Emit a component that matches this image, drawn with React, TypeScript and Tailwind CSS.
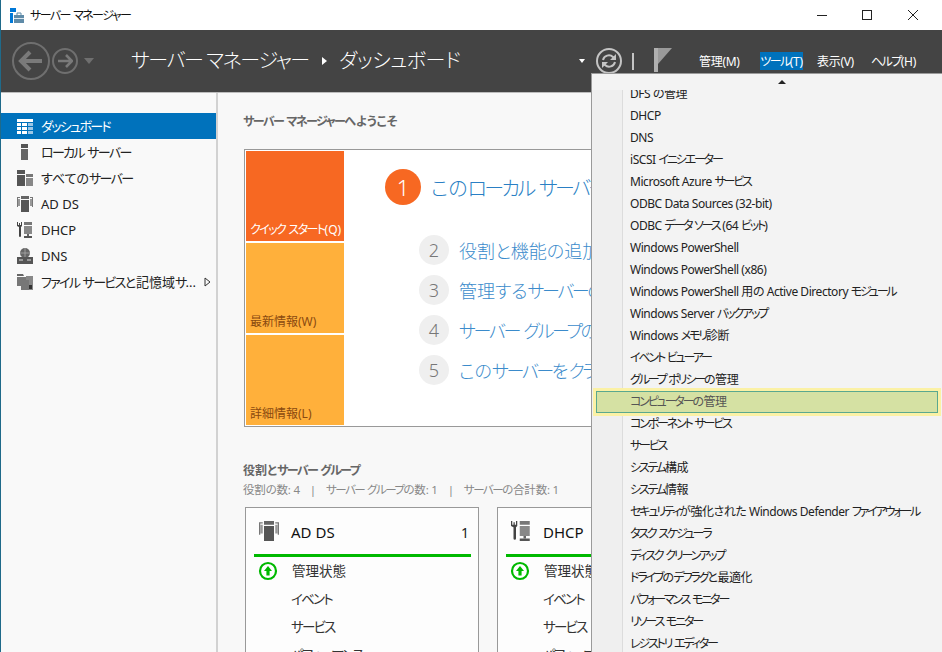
import type { ReactNode } from 'react';

// katakana runs are set tighter, the original UI font has narrow kana
function K({ t, tight }: { t: string; tight?: boolean }) {
  return (
    <>
      {t.split(/([ァ-ヶー]+)/).map((part, i) =>
        i % 2 === 1 ? (
          <span key={i} className={tight ? 'tracking-[-0.18em]' : 'tracking-[-0.13em]'}>
            {part}
          </span>
        ) : (
          part
        ),
      )}
    </>
  );
}

const AppIcon = () => (
  <svg width="15" height="15" viewBox="0 0 15 15" className="shrink-0">
    <rect x="0" y="0" width="6" height="4" fill="#0078d7" />
    <rect x="0" y="5" width="3" height="10" fill="#0078d7" />
    <path d="M4 7h10v8H4z" fill="#5f8ba8" />
    <path d="M7 7V5h4v2" fill="none" stroke="#5f8ba8" />
    <rect x="4" y="10" width="10" height="1" fill="#dce6ee" />
  </svg>
);

const DashIcon = () => (
  <svg width="16" height="15" viewBox="0 0 16 15" className="shrink-0">
    <rect width="16" height="3" fill="#fff" />
    <path d="M0 4h4v3H0zM5 4h5v3H5zM0 8h4v3H0zM5 8h5v3H5zM0 12h4v3H0zM5 12h5v3H5z" fill="#fff" />
    <path d="M11 4h5v3h-5zM11 8h5v3h-5zM11 12h5v3h-5z" fill="#9cc7e6" />
  </svg>
);
const LocalIcon = () => (
  <svg width="16" height="16" viewBox="0 0 16 16" className="shrink-0">
    <rect x="4" y="0" width="7" height="4" fill="#555" />
    <rect x="4" y="5" width="7" height="11" fill="#666" />
  </svg>
);
const AllIcon = () => (
  <svg width="16" height="16" viewBox="0 0 16 16" className="shrink-0">
    <rect x="0" y="0" width="8" height="4" fill="#555" />
    <rect x="0" y="5" width="8" height="11" fill="#555" />
    <rect x="9" y="4" width="7" height="3" fill="#777" />
    <rect x="9" y="8" width="7" height="8" fill="#888" />
  </svg>
);
const AdIcon = ({ size = 16 }: { size?: number }) => (
  <svg width={size} height={size} viewBox="0 0 16 16" className="shrink-0">
    <path d="M0 1h3v1H1v9H0zM13 1h3v10h-1V2h-2z" fill="#777" />
    <rect x="4" y="0" width="8" height="3" fill="#666" />
    <rect x="4" y="4" width="8" height="12" fill="#555" />
    <rect x="1" y="3" width="2" height="7" fill="#999" />
    <rect x="13" y="3" width="2" height="7" fill="#999" />
  </svg>
);
const DhcpIcon = ({ size = 16 }: { size?: number }) => (
  <svg width={size} height={size} viewBox="0 0 16 16" className="shrink-0">
    <path d="M1 0v3h1V1h1v2h1V0h1v4L4 5v9a1 1 0 0 1-2 0V5L0 4V0z" fill="#444" />
    <rect x="7" y="0" width="8" height="3" fill="#777" />
    <rect x="7" y="4" width="8" height="8" fill="#888" />
    <rect x="10" y="12" width="2" height="2" fill="#666" />
    <rect x="7" y="14" width="8" height="2" fill="#555" />
  </svg>
);
const DnsIcon = () => (
  <svg width="16" height="16" viewBox="0 0 16 16" className="shrink-0">
    <circle cx="8" cy="5" r="5" fill="#666" />
    <path d="M3 5h10M8 0v10" stroke="#aaa" strokeWidth="0.8" />
    <rect x="0" y="9" width="16" height="7" fill="#555" />
    <path d="M2 12h4M10 12h4" stroke="#ddd" />
  </svg>
);
const FilesIcon = () => (
  <svg width="16" height="16" viewBox="0 0 16 16" className="shrink-0">
    <path d="M0 0h6l1 2H0z" fill="#666" />
    <rect x="0" y="3" width="9" height="9" fill="#777" />
    <rect x="9" y="2" width="7" height="14" fill="#888" />
    <rect x="4" y="6" width="8" height="10" fill="#777" />
    <path d="M12 11h3v4h-3z" fill="#333" />
  </svg>
);
const UpStatus = () => (
  <svg width="20" height="20" viewBox="0 0 20 20" className="shrink-0">
    <circle cx="10" cy="10" r="8" fill="#fff" stroke="#00b900" strokeWidth="2.2" />
    <path d="M10 5l4 5h-2.400v4.500H8.400V10H6z" fill="#00b900" />
  </svg>
);

const sideItems = [
  { label: 'ダッシュボード', icon: <DashIcon />, active: true },
  { label: 'ローカル サーバー', icon: <LocalIcon /> },
  { label: 'すべてのサーバー', icon: <AllIcon /> },
  { label: 'AD DS', icon: <AdIcon /> },
  { label: 'DHCP', icon: <DhcpIcon /> },
  { label: 'DNS', icon: <DnsIcon /> },
  { label: 'ファイル サービスと記憶域サ...', icon: <FilesIcon />, arrow: true },
];

const steps = [
  { n: '2', label: '役割と機能の追加' },
  { n: '3', label: '管理するサーバーの追加' },
  { n: '4', label: 'サーバー グループの作成' },
  { n: '5', label: 'このサーバーをクラウド サービスに接続する' },
];

const tools = [
  'DHCP',
  'DNS',
  'iSCSI イニシエーター',
  'Microsoft Azure サービス',
  'ODBC Data Sources (32-bit)',
  'ODBC データ ソース (64 ビット)',
  'Windows PowerShell',
  'Windows PowerShell (x86)',
  'Windows PowerShell 用の Active Directory モジュール',
  'Windows Server バックアップ',
  'Windows メモリ診断',
  'イベント ビューアー',
  'グループ ポリシーの管理',
  'コンピューターの管理',
  'コンポーネント サービス',
  'サービス',
  'システム構成',
  'システム情報',
  'セキュリティが強化された Windows Defender ファイアウォール',
  'タスク スケジューラ',
  'ディスク クリーンアップ',
  'ドライブのデフラグと最適化',
  'パフォーマンス モニター',
  'リソース モニター',
  'レジストリ エディター',
];

function RoleCard({ title, icon, count }: { title: string; icon: ReactNode; count: string }) {
  return (
    <div className="h-[170px] w-[234px] shrink-0 border border-[#999] bg-[#fdfdfd] pr-[7px] pl-2">
      <div className="flex h-[46px] items-center justify-between pr-[2px] pl-[5px]">
        <div className="flex items-center gap-[12px]">
          {icon}
          <span className="pt-[3px] text-[15px] text-[#111]">{title}</span>
        </div>
        <span className="pt-[3px] text-[14px] text-[#222]">{count}</span>
      </div>
      <div className="h-[3px] bg-[#00b900]" />
      <div className="flex h-[28px] items-center gap-[14px] pl-[4px] text-[13.5px] text-[#333]">
        <UpStatus />
        <span>管理状態</span>
      </div>
      {['イベント', 'サービス', 'パフォーマンス'].map((row) => (
        <div key={row} className="flex h-[28px] items-center pl-[37px] text-[13.5px] text-[#333]">
          <span>
            <K t={row} />
          </span>
        </div>
      ))}
    </div>
  );
}

export default function App() {
  return (
    <div className="relative flex h-[652px] w-[942px] flex-col overflow-hidden border-l border-l-[#1f6a8a] bg-white font-['Noto_Sans','Noto_Sans_CJK_JP',sans-serif] [font-feature-settings:'palt']">
      {/* window title */}
      <div className="flex h-[30px] shrink-0 items-center bg-white pl-[9px]">
        <AppIcon />
        <span className="ml-[5px] pt-[2px] text-[12px] text-[#111]">
          <K t="サーバー マネージャー" />
        </span>
        <div className="ml-auto flex items-center">
          <div className="mr-[35px] h-px w-[10px] bg-[#222]" />
          <div className="mr-[36px] h-[10px] w-[10px] border border-[#222]" />
          <svg width="10" height="10" viewBox="0 0 10 10" className="mr-[24px]">
            <path d="M0 0l10 10M10 0L0 10" stroke="#222" strokeWidth="1" fill="none" />
          </svg>
        </div>
      </div>

      {/* dark toolbar */}
      <div className="flex h-[63px] shrink-0 items-center border-b border-b-[#bdbdbd] bg-[#444] pl-[11px] whitespace-nowrap">
        <div className="flex h-[38px] w-[38px] shrink-0 items-center justify-center rounded-full border-2 border-[#6f6f6f]">
          <svg width="26" height="22" viewBox="0 0 26 22">
            <path d="M12 2L3 11l9 9M3 11h21" fill="none" stroke="#7a7a7a" strokeWidth="4" />
          </svg>
        </div>
        <div className="ml-[2px] flex h-[26px] w-[26px] shrink-0 items-center justify-center rounded-full border-2 border-[#6f6f6f]">
          <svg width="16" height="14" viewBox="0 0 16 14">
            <path d="M9 1l6 6-6 6M15 7H1" fill="none" stroke="#7a7a7a" strokeWidth="2.600" />
          </svg>
        </div>
        <div className="ml-[6px] h-0 w-0 shrink-0 border-x-[5px] border-t-[6px] border-x-transparent border-t-[#6f6f6f]" />
        <span className="ml-[37px] w-[180px] shrink-0 text-[20px] font-light tracking-[-1.4px] text-white">サーバー マネージャー</span>
        <div className="mr-[12px] ml-[11px] h-0 w-0 shrink-0 border-y-[4px] border-l-[5px] border-y-transparent border-l-white" />
        <span className="w-[122px] shrink-0 text-[20px] font-light tracking-[-0.4px] text-white">ダッシュボード</span>
        <div className="ml-[118px] h-0 w-0 shrink-0 border-x-[3.500px] border-t-[4px] border-x-transparent border-t-white" />
        <div className="ml-[11px] flex h-[26px] w-[26px] shrink-0 items-center justify-center rounded-full border-2 border-[#c4c4c4]">
          <svg width="16" height="16" viewBox="0 0 16 16">
            <path d="M2 7a6 6 0 0 1 10-3l2 2M14 9a6 6 0 0 1-10 3l-2-2" fill="none" stroke="#c4c4c4" strokeWidth="2" />
            <path d="M15 1v6H9zM1 15V9h6z" fill="#c4c4c4" />
          </svg>
        </div>
        <div className="ml-[10px] h-[17px] w-[2px] shrink-0 bg-[#c4c4c4]" />
        <svg width="18" height="24" viewBox="0 0 18 24" className="mb-[3px] ml-[20px] shrink-0">
          <rect x="0" y="0" width="4" height="24" fill="#b0b0b0" />
          <path d="M4 0h14L4 16z" fill="#9a9a9a" />
        </svg>
        <span className="ml-[27px] w-[43px] shrink-0 pt-[2px] text-[12px] tracking-[-0.3px] text-white">管理(M)</span>
        <span className="ml-[18px] flex h-[18px] w-[43px] shrink-0 items-center justify-center bg-[#0072bc] pt-[2px] text-[12px] tracking-[-0.3px] text-white">
          <span>
            <K t="ツール(T)" />
          </span>
        </span>
        <span className="ml-[14px] w-[39px] shrink-0 pt-[2px] text-[12px] tracking-[-0.3px] text-white">表示(V)</span>
        <span className="ml-[15px] w-[44px] shrink-0 pt-[2px] text-[12px] tracking-[-0.3px] text-white">
          <K t="ヘルプ(H)" />
        </span>
      </div>

      {/* body */}
      <div className="flex min-h-0 flex-1">
        <aside className="flex w-[217px] shrink-0 flex-col border-r-2 border-r-[#d2d2d2] bg-[#f9f9f9] pt-[20px]">
          {sideItems.map((item) => (
            <div
              key={item.label}
              className={`flex h-[26px] items-center gap-[8px] pl-[16px] text-[13px] whitespace-nowrap ${item.active ? 'bg-[#0072bc] text-white' : 'text-[#222]'}`}
            >
              {item.icon}
              <span className="pt-[2px]">
                <K t={item.label} />
              </span>
              {item.arrow && (
                <svg width="7" height="10" viewBox="0 0 7 10" className="shrink-0">
                  <path d="M1 1l5 4-5 4z" fill="none" stroke="#333" />
                </svg>
              )}
            </div>
          ))}
        </aside>

        <main className="min-w-0 flex-1 overflow-hidden bg-[#f8f8f8] pt-[20px] pl-[26px]">
          <h2 className="-ml-px text-[12px] leading-[18px] font-bold text-[#666]">
            <K t="サーバー マネージャーへようこそ" />
          </h2>

          <div className="mt-[18px] flex h-[278px] w-[700px] gap-[1px] border border-[#999] bg-white p-[1px] pr-0">
            <div className="flex w-[98px] shrink-0 flex-col gap-[2px] whitespace-nowrap">
              <div className="flex h-[90px] items-end bg-[#f76822] pb-[2px] pl-[4px] text-[12px] text-white">
                <span>
                  <K t="クイック スタート(Q)" />
                </span>
              </div>
              <div className="flex h-[90px] items-end bg-[#ffb03b] pb-[2px] pl-[4px] text-[12px] text-[#8a4a10]">最新情報(W)</div>
              <div className="flex h-[90px] items-end bg-[#ffb03b] pb-[2px] pl-[4px] text-[12px] text-[#8a4a10]">詳細情報(L)</div>
            </div>
            <div className="pt-[18px] pl-[40px]">
              <div className="flex h-[36px] items-center gap-[10px]">
                <div className="flex h-[36px] w-[36px] items-center justify-center rounded-full bg-[#f76822] text-[22px] font-light text-white">1</div>
                <span className="pt-[3px] text-[20px] whitespace-nowrap font-light text-[#2a7fc4]">
                  <K t="このローカル サーバーの構成" />
                </span>
              </div>
              <div className="mt-[30px] flex flex-col gap-[10px] pl-[34px]">
                {steps.map((s) => (
                  <div key={s.n} className="flex h-[30px] items-center gap-[10px]">
                    <div className="flex h-[30px] w-[30px] items-center justify-center rounded-full bg-[#efefef] text-[18px] font-light text-[#777]">{s.n}</div>
                    <span className="pt-[2px] text-[18px] whitespace-nowrap font-light text-[#3b8bcb]">
                      <K t={s.label} />
                    </span>
                  </div>
                ))}
              </div>
            </div>
          </div>

          <h2 className="mt-[35px] -ml-px text-[12px] leading-[18px] font-bold text-[#666]">
            <K t="役割とサーバー グループ" />
          </h2>
          <p className="-ml-px text-[11.5px] leading-[20px] tracking-[-0.2px] whitespace-nowrap text-[#888]">
            <K t="役割の数: 4" />
            <span className="mx-[10px]">|</span>
            <K t="サーバー グループの数: 1" />
            <span className="mx-[10px]">|</span>
            <K t="サーバーの合計数: 1" />
          </p>
          <div className="mt-[7px] flex gap-[18px] pl-px">
            <RoleCard title="AD DS" icon={<AdIcon size={20} />} count="1" />
            <RoleCard title="DHCP" icon={<DhcpIcon size={20} />} count="1" />
          </div>
        </main>
      </div>

      {/* tools menu */}
      <div className="absolute top-[73px] left-[590px] flex h-[579px] w-[351px] flex-col overflow-hidden border-t border-l border-[#9a9a9a] bg-[#f3f3f3]">
        <div className="flex h-[16px] shrink-0 items-center pl-[186px]">
          <div className="h-0 w-0 border-x-[4px] border-b-[4px] border-x-transparent border-b-[#222]" />
        </div>
        <div className="flex min-h-0 flex-1">
          <div className="w-[31px] shrink-0 border-r border-r-[#dcdcdc] bg-[#efefef]" />
          <div className="min-w-0 flex-1">
            <div className="flex h-[15px] items-end overflow-hidden pl-[7px] text-[12px] leading-[22px] tracking-[-0.45px] text-[#222]">
              <span className="shrink-0">DFS の管理</span>
            </div>
            {tools.map((t) => (
              <div
                key={t}
                className={
                  t === 'コンピューターの管理'
                    ? '-ml-[27px] mr-[4px] flex h-[22px] items-center border border-[#5aa88f] bg-[#d5e1a3] pl-[33px] text-[12px] tracking-[-0.45px] whitespace-nowrap text-[#555] shadow-[0_0_0_3px_#fbf1a5]'
                    : 'flex h-[22px] items-center pl-[7px] text-[12px] tracking-[-0.45px] whitespace-nowrap text-[#222]'
                }
              >
                <span>
                  <K t={t} tight />
                </span>
              </div>
            ))}
          </div>
        </div>
      </div>
    </div>
  );
}
